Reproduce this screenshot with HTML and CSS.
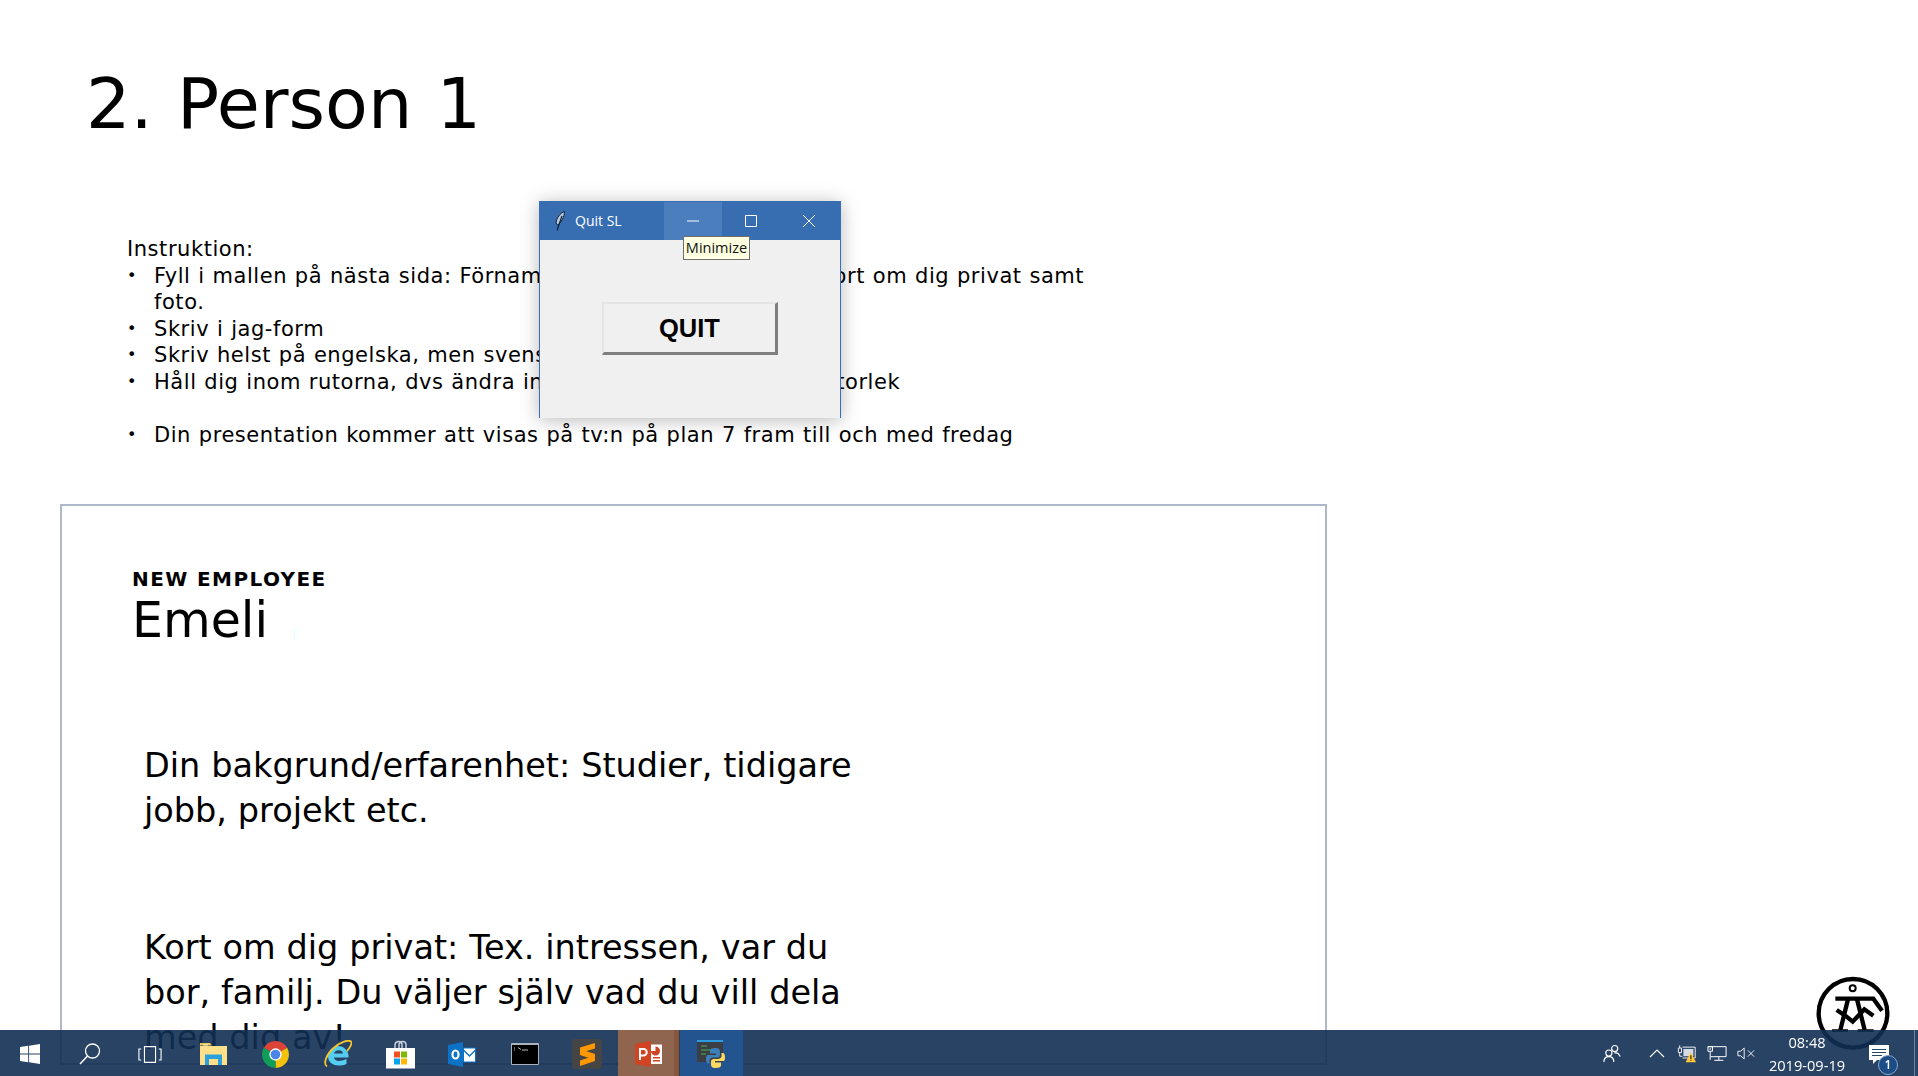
FILE: index.html
```html
<!DOCTYPE html>
<html lang="sv">
<head>
<meta charset="utf-8">
<title>2. Person 1</title>
<link rel="stylesheet" href="styles.css">
</head>
<body>
<main class="slide">
  <h1 class="title">2. Person 1</h1>
  <section class="instructions">
    <p class="lead">Instruktion:</p>
    <ul class="steps">
      <li>Fyll i mallen på nästa sida: Förnamn, bakgrund, erfarenhet, kort om dig privat samt<br>foto.</li>
      <li>Skriv i jag-form</li>
      <li>Skriv helst på engelska, men svenska går också bra</li>
      <li>Håll dig inom rutorna, dvs ändra inte på rutornas form eller storlek</li>
      <li class="gap">Din presentation kommer att visas på tv:n på plan 7 fram till och med fredag</li>
    </ul>
  </section>
  <section class="card">
    <p class="eyebrow">NEW EMPLOYEE</p>
    <p class="name">Emeli</p>
    <p class="body first">Din bakgrund/erfarenhet: Studier, tidigare<br>jobb, projekt etc.</p>
    <p class="body second">Kort om dig privat: Tex. intressen, var du<br>bor, familj. Du väljer själv vad du vill dela<br>med dig av!</p>
    <i class="speck"></i>
  </section>
</main>

<svg class="logo" viewBox="0 0 270 270" aria-hidden="true">
  <circle cx="123" cy="130" r="103" fill="#fff" stroke="#000" stroke-width="13"/>
  <circle cx="122" cy="55" r="9" fill="none" stroke="#000" stroke-width="6"/>
  <g fill="none" stroke="#000" stroke-width="13">
    <path d="M70 86H184L210 122"/>
    <path d="M108 88L85 180"/>
    <path d="M135 88L158 180"/>
    <path d="M74 120L100 137L122 155L157 118L184 137"/>
  </g>
  <path d="M60 182H108M137 182H185" fill="none" stroke="#000" stroke-width="8"/>
</svg>

<section class="window">
  <header class="titlebar">
    <svg class="feather" viewBox="0 0 10 20" aria-hidden="true">
      <path d="M9.500 .5C5 2 1.500 7 1 12L2.500 14C6 12 9.500 6 9.500 .5Z" fill="#b9c8d9" stroke="#0e2038" stroke-width="1"/>
      <path d="M7 5L2 19.500" stroke="#0e2038" stroke-width="1.200"/>
    </svg>
    <span class="wintitle">Quit SL</span>
    <span class="ctrl hover"><svg viewBox="0 0 14 14" class="glyph"><path d="M1 7H13"/></svg></span>
    <span class="ctrl"><svg viewBox="0 0 14 14" class="glyph"><path d="M1.500 1.500H12.500V12.500H1.500Z"/></svg></span>
    <span class="ctrl"><svg viewBox="0 0 14 14" class="glyph"><path d="M1 1L13 13M13 1L1 13"/></svg></span>
  </header>
  <div class="winbody"><button class="quit" type="button">QUIT</button></div>
  <span class="tooltip">Minimize</span>
</section>

<footer class="taskbar">
  <div class="apps">
    <span class="sys"><svg viewBox="0 0 22 22" class="i-start"><path fill="#fff" d="M0 3.200L9 2V10.400H0ZM10 1.800L22 0V10.400H10ZM0 11.600H9V20L0 18.800ZM10 11.600H22V22L10 20.200Z"/></svg></span>
    <span class="sys"><svg viewBox="0 0 22 22" class="i-search"><circle cx="13.500" cy="8" r="7" fill="none" stroke="#fff" stroke-width="1.300"/><path d="M8.500 13L1 21" stroke="#fff" stroke-width="1.500"/></svg></span>
    <span class="sys last"><svg viewBox="0 0 26 20" class="i-task"><path fill="none" stroke="#fff" stroke-width="1.200" d="M7 1.500H19V18.500H7ZM3.500 4H1V16H3.500M22.500 4H25V16H22.500"/></svg></span>
    <span class="app"><svg viewBox="0 0 27 22" class="i-folder"><path fill="#f2c55c" d="M0 0H10L12 2.500H0Z"/><path fill="#fbe9a6" d="M3 1H8V2.500H3Z"/><path fill="#ffe08a" d="M0 3H27V22H0Z"/><path fill="#2ba0dc" d="M5 22V11.500H22V22H18V16H9V22Z"/></svg></span>
    <span class="app"><svg viewBox="0 0 28 28" class="i-27"><path fill="#db4437" d="M14 14L1.900 7A14 14 0 0 1 26.100 7Z"/><path fill="#f4c20d" d="M14 14L26.100 7A14 14 0 0 1 14 28Z"/><path fill="#0f9d58" d="M14 14L14 28A14 14 0 0 1 1.900 7Z"/><circle cx="14" cy="14" r="6.400" fill="#fff"/><circle cx="14" cy="14" r="5" fill="#4a86e8"/></svg></span>
    <span class="app"><svg viewBox="0 0 29 28" class="i-ie"><path fill="#55cdf0" d="M15 6A10.500 10.500 0 0 1 25.500 17.500H11C11.500 21.500 17 22 23.500 19V24C15 27.500 5 25 5 16A10.500 10.500 0 0 1 15 6ZM11 13.500H20C20 9 12 9 11 13.500Z"/><path fill="none" stroke="#f4c430" stroke-width="1.800" d="M4 26.500C0 24 3 15 10 8.500C17 2 25 -.5 28 1.500C29.500 3 27 8 24 11"/></svg></span>
    <span class="app"><svg viewBox="0 0 29 29" class="i-store"><path fill="none" stroke="#c6ced8" stroke-width="1.500" d="M9 9V5C9 1 15 0 16 4V9M13 9V5C13 1 19 0 20 4V9"/><path fill="#fff" d="M0 8H29V28.500H0Z"/><path fill="#f25022" d="M8 11.500H14V17.500H8Z"/><path fill="#7fba00" d="M15 11.500H21V17.500H15Z"/><path fill="#00a4ef" d="M8 18.500H14V24.500H8Z"/><path fill="#ffb900" d="M15 18.500H21V24.500H15Z"/></svg></span>
    <span class="app"><svg viewBox="0 0 28 25" class="i-out"><path fill="#0b72c6" d="M0 3L15 0V25L0 22Z"/><ellipse cx="7.500" cy="12.500" rx="3" ry="4" fill="none" stroke="#fff" stroke-width="2.200"/><path fill="#fff" stroke="#0b72c6" d="M15.500 6H27.500V20H15.500Z"/><path fill="none" stroke="#0b72c6" stroke-width="1.400" d="M15.500 8L21.500 14L27.500 8"/></svg></span>
    <span class="app"><svg viewBox="0 0 28 22" class="i-cmd"><path fill="#000" stroke="#aab2bb" d="M.5 .5H27.500V21.500H.5Z"/><path fill="#aab2bb" d="M.5 .5H27.500V2H.5Z"/><path stroke="#bbb" fill="none" d="M3 5H4M3 7H4M7 4.500L10 6.500M11 7H17"/></svg></span>
    <span class="app"><svg viewBox="0 0 30 30" class="i-30"><rect width="30" height="30" rx="3" fill="#454545"/><path fill="#ff9800" d="M8 8.500L23 4V9.500L8 14ZM8 10L23 15V21L8 16ZM8 21.500L23 16.500V22L8 27Z"/></svg></span>
    <span class="app ppt"><svg viewBox="0 0 27 26" class="i-ppt"><path fill="#fff" d="M14 3.500H27V23H14Z"/><path fill="#d04423" d="M0 3L16 0V26L0 23Z"/><path fill="none" stroke="#fff" stroke-width="2" d="M5 19V8H8.500A3 3 0 0 1 8.500 14.500H5"/><path fill="#d04423" d="M20.500 5.500A4.500 4.500 0 1 1 16 10H20.500ZM18 16H25V17.500H18ZM18 19H25V20.500H18Z"/></svg></span>
    <span class="app py"><svg viewBox="0 0 29 28" class="i-py"><path fill="#3b3f45" d="M0 1H26V22H0Z"/><path fill="#2d9de0" d="M0 0H26V2H0Z"/><path stroke="#4caf50" d="M4 6H10M4 10H15M4 14H9"/><path fill="#3d7fb8" d="M18 8C12 8 13 11 13 13.500H19V15H10.500C8.500 15 8.500 22.500 10.500 23.500H12.500V20.500C12.500 18 15 17.500 19 17.500C23 17.500 23 16.500 23 13C23 9 22 8 18 8Z"/><path fill="#ffd95e" d="M19 28C25 28 24 25 24 22.500H18V21H26.500C28.500 21 28.500 14 26.500 13H24.500V16C24.500 18.500 22 19 18 19C14 19 14 20 14 23.500C14 27 15 28 19 28Z"/></svg></span>
  </div>
  <div class="tray">
    <svg viewBox="0 0 20 20" class="t-people"><g fill="none" stroke="#fff" stroke-width="1.300"><circle cx="13" cy="4.500" r="3.400"/><circle cx="6.500" cy="9.500" r="3.400"/><path d="M1 19.500C1 15.500 3 13.500 6.500 13.500C10 13.500 12 15.500 12 19.500M12.500 9.500C16 8.500 18 10.500 19 13.500"/></g></svg>
    <svg viewBox="0 0 16 9" class="t-chev"><path d="M1 8L8 1L15 8" fill="none" stroke="#fff" stroke-width="1.100"/></svg>
    <svg viewBox="0 0 22 20" class="t-batt"><g fill="none" stroke="#fff" stroke-width="1"><path d="M6 3H20V15H6"/><path d="M1.500 4H5V9H1.500ZM3 1V4M3 9V13H6"/></g><path fill="#d5dbe2" d="M7 5H18V13H7Z"/><path fill="#ffc83d" d="M15 8.500L21 19.500H9.500Z"/><path fill="#000" d="M14.800 12H15.800V16H14.800ZM14.800 17H15.800V18H14.800Z"/></svg>
    <svg viewBox="0 0 22 18" class="t-net"><path fill="none" stroke="#fff" stroke-width="1.100" d="M1 1.500H21V12.500H4M1 1.500H6V6.500H1ZM3.500 3V5M3.500 6.500V16M13 12.500V16.500M8 16.500H18"/></svg>
    <svg viewBox="0 0 20 14" class="t-vol"><path fill="none" stroke="#fff" stroke-width="1" d="M1 4.500H4L8 1V13L4 9.500H1ZM12 3.500L19 10.500M19 3.500L12 10.500"/></svg>
    <div class="clock"><span>08:48</span><span>2019-09-19</span></div>
    <span class="notify">
      <svg viewBox="0 0 20 19" class="t-msg"><path fill="#fff" d="M0 0H20V15H8L4 19V15H0Z"/><path stroke="#29456c" d="M3 4.500H17M3 7.500H17M3 10.500H13"/></svg>
      <b class="badge">1</b>
    </span>
    <i class="peek"></i>
  </div>
</footer>
</body>
</html>
```
FILE: styles.css
```css
* { box-sizing: border-box; }
html, body { margin: 0; height: 100%; }
body {
  background: #fff;
  color: #000;
  overflow: hidden;
  font-family: "DejaVu Sans", Verdana, sans-serif;
}
p, h1, ul { margin: 0; padding: 0; }

.slide {
  height: 1076px;
  padding: 0 0 0 60px;
  overflow: hidden;
}
.title {
  font-size: 70px;
  font-weight: 400;
  line-height: 84px;
  margin: 62px 0 0 26px;
  word-spacing: 2px;
}
.instructions {
  margin: 90px 0 0 67px;
  font-size: 21px;
  letter-spacing: .55px;
  word-spacing: .6px;
  line-height: 26.500px;
}
.steps { list-style: none; }
.steps li { padding-left: 27px; position: relative; white-space: nowrap; }
.steps li::before {
  content: "•";
  position: absolute;
  left: 0;
  font-size: 16px;
}
.steps .gap { margin-top: 26.500px; }

.card {
  width: 1267px;
  height: 561px;
  margin-top: 56px;
  border: 2px solid #adb9ca;
  padding: 60px 0 0 70px;
  position: relative;
}
.eyebrow {
  font-size: 20px;
  font-weight: 700;
  letter-spacing: 1.400px;
  line-height: 26px;
}
.name {
  font-size: 49px;
  line-height: 58px;
}
.body {
  font-size: 33.500px;
  word-spacing: .2px;
  line-height: 45px;
  margin-left: 12px;
}
.first { margin-top: 93px; }
.second { margin-top: 92px; }
.speck {
  position: absolute;
  left: 232px;
  top: 123px;
  width: 1px;
  height: 10px;
  background: #d6ffff;
}

.logo {
  position: absolute;
  left: 1812px;
  top: 970px;
  width: 90px;
  height: 90px;
}

.window {
  position: absolute;
  left: 539px;
  top: 201px;
  width: 302px;
  height: 217px;
  background: #f0f0f0;
  border: 1px solid #3b6fb5;
  border-top: 0;
  border-bottom: 0;
  box-shadow: 0 2px 18px rgba(0, 0, 0, .28);
  font-family: "Open Sans", sans-serif;
}
.titlebar {
  display: flex;
  align-items: center;
  height: 39px;
  background: #376eb1;
  color: #fff;
  padding-left: 15px;
}
.feather { width: 10px; height: 20px; flex: none; }
.wintitle {
  font-size: 14px;
  margin-left: 10px;
  width: 89px;
  flex: none;
}
.ctrl {
  width: 58.200px;
  height: 38px;
  display: flex;
  align-items: center;
  justify-content: center;
  flex: none;
}
.ctrl.hover { background: #4a7ebc; }
.glyph {
  width: 14px;
  height: 14px;
  fill: none;
  stroke: #fff;
  stroke-width: 1;
}
.winbody {
  padding: 62px 0 0 62px;
}
.quit {
  display: block;
  width: 176px;
  height: 53px;
  padding: 0;
  background: #f0f0f0;
  border-style: solid;
  border-width: 2px 3px 3px 2px;
  border-color: #e4e4e4 #7e7e7e #7e7e7e #e4e4e4;
  font: 700 25.500px "Liberation Sans", Arial, sans-serif;
  color: #000;
}
.tooltip {
  position: absolute;
  left: 143px;
  top: 35px;
  width: 67px;
  height: 24px;
  border: 1px solid #6f6f6f;
  background: #ffffe1;
  color: #111;
  font-size: 14.500px;
  line-height: 22px;
  text-align: center;
  white-space: nowrap;
}

.taskbar {
  position: fixed;
  left: 0;
  right: 0;
  bottom: 0;
  height: 46px;
  background: rgba(18, 47, 84, .9);
  display: flex;
  justify-content: space-between;
  color: #fff;
  font-family: "Open Sans", sans-serif;
}
.apps { display: flex; }
.sys, .app {
  height: 46px;
  padding-top: 2px;
  display: flex;
  align-items: center;
  justify-content: center;
}
.sys { width: 60px; }
.sys.last { margin-right: 2px; }
.app { width: 62.300px; }
.ppt { background: #90654f; box-shadow: inset -5px 0 0 #85573f; border-right: 1px solid #2a3a50; }
.py { background: #23548f; }
.i-start { width: 20px; height: 20px; }
.i-search { width: 22px; height: 22px; }
.i-task { width: 24px; height: 19px; }
.i-folder { width: 27px; height: 22px; }
.i-27 { width: 27px; height: 27px; }
.i-ie { width: 29px; height: 28px; }
.i-store { width: 29px; height: 29px; }
.i-out { width: 28px; height: 25px; }
.i-cmd { width: 28px; height: 22px; }
.i-30 { width: 30px; height: 30px; }
.i-ppt { width: 27px; height: 26px; }
.i-py { width: 29px; height: 28px; }

.tray { display: flex; align-items: center; }
.t-people { width: 18px; height: 19px; margin-right: 28px; }
.t-chev { width: 16px; height: 9px; margin-right: 12px; }
.t-batt { width: 20px; height: 19px; margin-right: 10px; }
.t-net { width: 20px; height: 17px; margin-right: 10px; }
.t-vol { width: 18px; height: 13px; margin-right: 10px; }
.clock {
  display: flex;
  flex-direction: column;
  align-items: center;
  font-size: 14.600px;
  line-height: 23px;
  width: 84px;
  margin-top: 1px;
}
.notify {
  position: relative;
  display: block;
  width: 46px;
  height: 46px;
  margin-left: 19px;
}
.t-msg { position: absolute; left: 1px; top: 15px; width: 20px; height: 19px; }
.badge {
  position: absolute;
  left: 10px;
  top: 25px;
  width: 20px;
  height: 20px;
  border-radius: 50%;
  border: 1.500px solid #86a8cf;
  background: #1d4d87;
  color: #fff;
  font-size: 12px;
  font-weight: 600;
  line-height: 17px;
  text-align: center;
}
.peek {
  width: 1px;
  height: 46px;
  background: #6f849e;
  margin: 0 3px 0 0;
}
```
